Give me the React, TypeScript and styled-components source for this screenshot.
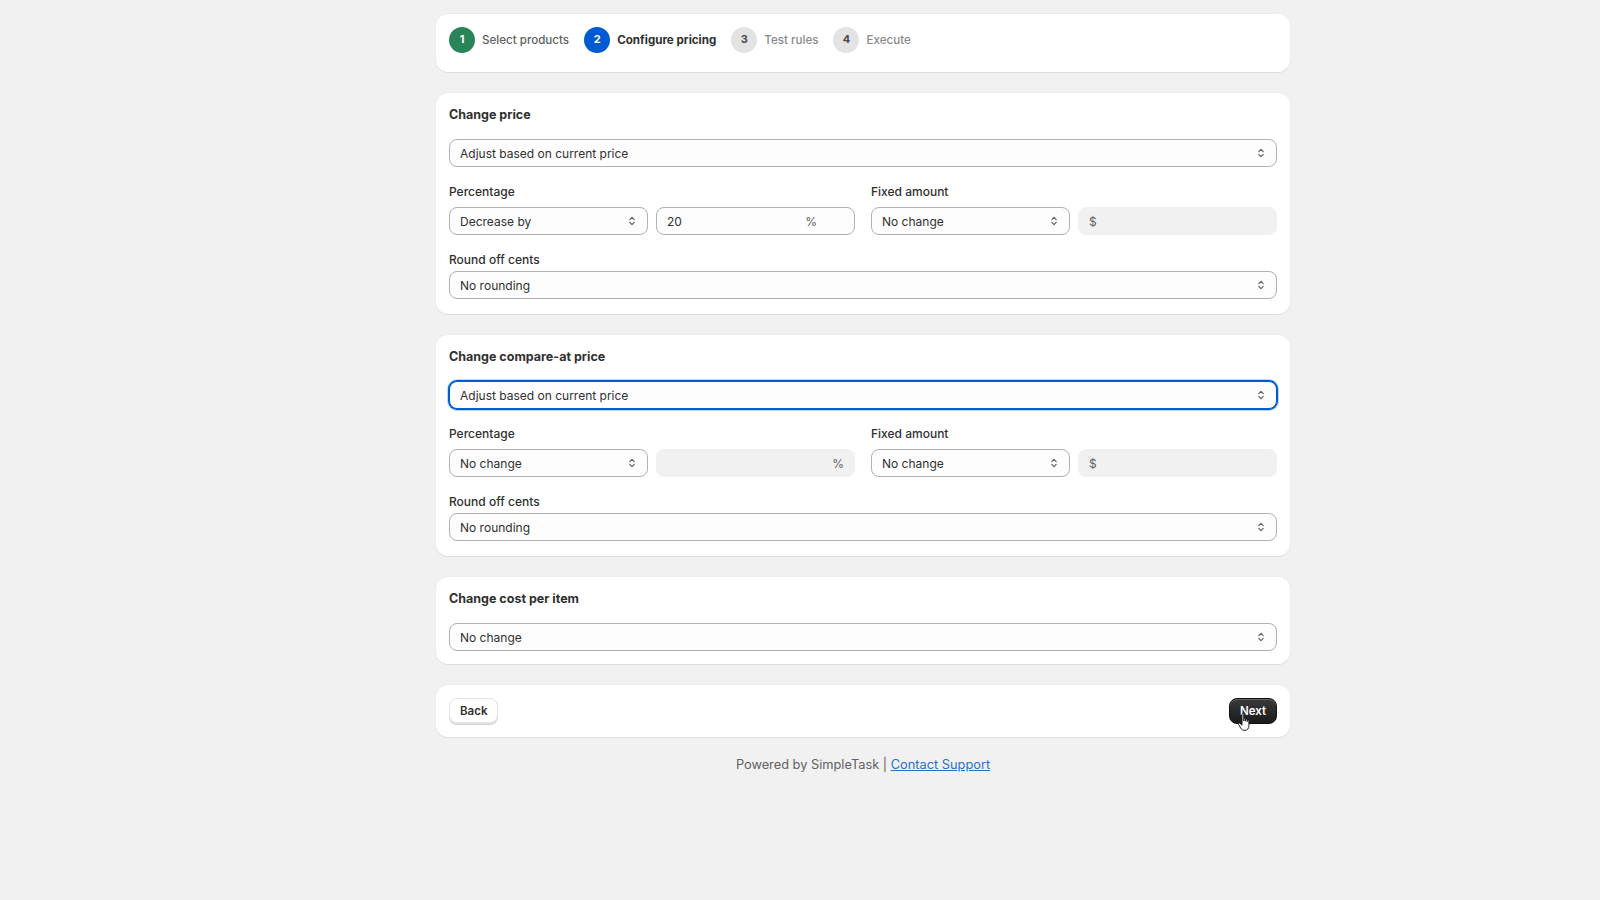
import React from "react";
import styled, { createGlobalStyle } from "styled-components";

const Global = createGlobalStyle`
  html, body { margin: 0; padding: 0; background: #f1f1f1; }
  body { font-family: Inter, "Noto Sans", "Liberation Sans", sans-serif; color: #303030; -webkit-font-smoothing: antialiased; }
  * { box-sizing: border-box; }
`;

const Page = styled.div`
  width: 1600px;
  min-height: 900px;
  padding: 14px 0 40px 436px;
`;

const Column = styled.div`
  width: 854px;
  display: flex;
  flex-direction: column;
  gap: 21px;
`;

const Card = styled.section<{ $bottom?: number }>`
  background: #ffffff;
  border-radius: 12px;
  box-shadow: 0 1px 0 rgba(26, 26, 26, 0.07), 0 0 0 1px rgba(0, 0, 0, 0.02);
  padding: 12px 13px ${(p) => p.$bottom ?? 13}px;
  display: flex;
  flex-direction: column;
`;

const StepCard = styled(Card)`
  padding: 13px 13px 19px;
  flex-direction: row;
  align-items: center;
  gap: 15px;
`;

const Step = styled.div`
  display: flex;
  align-items: center;
  gap: 7px;
`;

const Circle = styled.span<{ $bg: string; $fg: string }>`
  width: 26px;
  height: 26px;
  border-radius: 50%;
  background: ${(p) => p.$bg};
  color: ${(p) => p.$fg};
  display: flex;
  align-items: center;
  justify-content: center;
  font-size: 11px;
  font-weight: 700;
  padding-bottom: 3px;
`;

const StepLabel = styled.span<{ $active?: boolean; $muted?: boolean }>`
  font-size: 11.6px;
  font-weight: ${(p) => (p.$active ? 650 : 450)};
  color: ${(p) => (p.$active ? "#303030" : p.$muted ? "#8a8a8a" : "#616161")};
`;

const Heading = styled.h2`
  margin: 0 0 14px;
  font-size: 12.5px;
  line-height: 20px;
  font-weight: 650;
  color: #303030;
`;

const Label = styled.div<{ $tight?: boolean }>`
  font-size: 12px;
  line-height: 16px;
  font-weight: 450;
  color: #303030;
  margin: 17px 0 ${(p) => (p.$tight ? 3 : 7)}px;
`;

const Field = styled.div<{ $focused?: boolean; $disabled?: boolean }>`
  height: 28px;
  border-radius: 8px;
  display: flex;
  align-items: center;
  padding: 0 10px;
  font-size: 12px;
  color: ${(p) => (p.$disabled ? "#8a8a8a" : "#303030")};
  background: ${(p) => (p.$disabled ? "#f1f1f1" : "#fdfdfd")};
  border: 1px solid ${(p) => (p.$disabled ? "#f1f1f1" : p.$focused ? "#005bd3" : "#b1b1b1")};
  box-shadow: ${(p) => (p.$focused ? "0 0 0 1px #005bd3, 0 0 0 2px rgba(0,91,211,0.25)" : "none")};
`;

const FieldText = styled.span`
  flex: 1;
  white-space: nowrap;
`;

const Suffix = styled.span<{ $pad: number }>`
  color: #616161;
  padding-right: ${(p) => p.$pad}px;
`;

const Row = styled.div`
  display: grid;
  grid-template-columns: 1fr 1fr;
  gap: 16px;
`;

const Group = styled.div`
  display: flex;
  flex-direction: column;
`;

const Pair = styled.div`
  display: grid;
  grid-template-columns: 1fr 1fr;
  gap: 8px;
`;

const ActionCard = styled(Card)`
  padding: 13px;
  flex-direction: row;
  justify-content: space-between;
  align-items: center;
`;

const Button = styled.button<{ $primary?: boolean }>`
  position: relative;
  height: 26px;
  border-radius: 8px;
  padding: 0 10px;
  font-family: inherit;
  font-size: 11.5px;
  font-weight: 600;
  cursor: pointer;
  color: ${(p) => (p.$primary ? "#ffffff" : "#303030")};
  background: ${(p) => (p.$primary ? "linear-gradient(#3a3a3a, #1a1a1a)" : "#ffffff")};
  border: ${(p) => (p.$primary ? "1px solid #111" : "1px solid #e3e3e3")};
  box-shadow: ${(p) =>
    p.$primary
      ? "inset 0 1px 0 rgba(255,255,255,0.2)"
      : "0 1px 0 #d4d4d4, inset 0 -1px 0 #e3e3e3"};
`;

const Cursor = styled.svg`
  position: absolute;
  left: 7px;
  top: 13px;
  pointer-events: none;
`;

const Footer = styled.div`
  text-align: center;
  font-size: 12.8px;
  color: #616161;
  margin-top: -1px;
  a {
    color: #2c6ecb;
    text-decoration: underline;
  }
`;

const Chevron = () => (
  <svg width="10" height="14" viewBox="0 0 10 14" fill="none">
    <path d="M2.8 5.6 5 3.4l2.2 2.2M2.8 8.4 5 10.6l2.2-2.2" stroke="#616161" strokeWidth="1.2" strokeLinecap="round" strokeLinejoin="round" />
  </svg>
);

const Select = ({ value, focused }: { value: string; focused?: boolean }) => (
  <Field $focused={focused}>
    <FieldText>{value}</FieldText>
    <Chevron />
  </Field>
);

const Input = ({ value, suffix, prefix, disabled, pad = 0 }: { value?: string; suffix?: string; prefix?: string; disabled?: boolean; pad?: number }) => (
  <Field $disabled={disabled}>
    {prefix && <Suffix $pad={0}>{prefix}</Suffix>}
    <FieldText>{value}</FieldText>
    {suffix && <Suffix $pad={pad}>{suffix}</Suffix>}
  </Field>
);

const PriceCard = ({ title, pct, pctValue, pctPad, focused, pctDisabled }: { title: string; pct: string; pctValue: string; pctPad: number; focused?: boolean; pctDisabled?: boolean }) => (
  <Card $bottom={15}>
    <Heading>{title}</Heading>
    <Select value="Adjust based on current price" focused={focused} />
    <Row>
      <Group>
        <Label>Percentage</Label>
        <Pair>
          <Select value={pct} />
          <Input value={pctValue} suffix="%" pad={pctPad} disabled={pctDisabled} />
        </Pair>
      </Group>
      <Group>
        <Label>Fixed amount</Label>
        <Pair>
          <Select value="No change" />
          <Input prefix="$" disabled />
        </Pair>
      </Group>
    </Row>
    <Label $tight>Round off cents</Label>
    <Select value="No rounding" />
  </Card>
);

const steps = [
  { n: 1, label: "Select products", bg: "#29845a", fg: "#fff" },
  { n: 2, label: "Configure pricing", bg: "#005bd3", fg: "#fff", active: true },
  { n: 3, label: "Test rules", bg: "#e3e3e3", fg: "#4a4a4a", muted: true },
  { n: 4, label: "Execute", bg: "#e3e3e3", fg: "#4a4a4a", muted: true },
];

export default function App() {
  return (
    <>
      <Global />
      <Page>
        <Column>
          <StepCard>
            {steps.map((s) => (
              <Step key={s.n}>
                <Circle $bg={s.bg} $fg={s.fg}>{s.n}</Circle>
                <StepLabel $active={s.active} $muted={s.muted}>{s.label}</StepLabel>
              </Step>
            ))}
          </StepCard>
          <PriceCard title="Change price" pct="Decrease by" pctValue="20" pctPad={27} />
          <PriceCard title="Change compare-at price" pct="No change" pctValue="" pctPad={0} focused pctDisabled />
          <Card>
            <Heading>Change cost per item</Heading>
            <Select value="No change" />
          </Card>
          <ActionCard>
            <Button>Back</Button>
            <Button $primary>
              Next
              <Cursor width="18" height="22" viewBox="0 0 18 22">
                <path
                  d="M5 2.2c0-.9 1.8-.9 1.8 0V9l.1-2c0-.9 1.7-.9 1.7 0v2.2-1.4c0-.9 1.7-.9 1.7 0v1.8-1c0-.9 1.6-.9 1.6 0v5.2c0 2.6-1.4 4.5-3.8 4.5H7c-1.5 0-2.4-.8-3.2-2L1.6 12.4c-.6-.9.6-1.8 1.4-1L5 13.2Z"
                  fill="#fff"
                  stroke="#222"
                  strokeWidth="1"
                  strokeLinejoin="round"
                />
              </Cursor>
            </Button>
          </ActionCard>
          <Footer>
            Powered by SimpleTask | <a href="#">Contact Support</a>
          </Footer>
        </Column>
      </Page>
    </>
  );
}
